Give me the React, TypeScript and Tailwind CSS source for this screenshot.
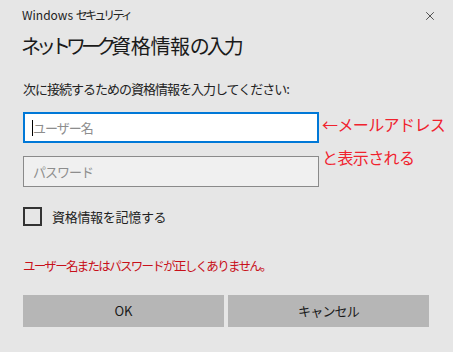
import { X } from 'lucide-react';

const font = { fontFamily: '"Noto Sans CJK JP", "Noto Sans", sans-serif' };

export default function App() {
    return (
        <div className="h-[352px] w-[453px] overflow-hidden bg-[#e6e6e6] text-[#1a1a1a]" style={font}>
            <div className="flex items-start justify-between pl-[22px] pr-[16px] pt-[6px]">
                <p className="text-[12px] leading-[18px] text-[#222]">
                    Windows <span className="tracking-[-2.8px]">セキュリティ</span>
                </p>
                <X size={14} strokeWidth={1.3} className="mt-[3px] text-[#222]" />
            </div>

            <div className="mt-[8px] pl-[21px] text-[20px] leading-[28px] text-[#1a1a1a]">
                <span className="tracking-[-5px]">ネットワーク</span>
                <span className="tracking-[-0.3px]">資格情報</span>
                <span className="tracking-[-3px]">の入力</span>
            </div>

            <p className="mt-[20px] pl-[23px] text-[13px] leading-[18px] tracking-[-1px] text-[#222]">次に接続するための資格情報を入力してください:</p>

            <div className="mt-[14px] flex items-start gap-[3px] pl-[23px]">
                <div className="flex w-[296px] flex-col gap-[13px]">
                    <div className="flex h-[31px] items-center border-2 border-[#0078d7] bg-white pl-[7px]">
                        <span className="h-[16px] w-px bg-black" />
                        <span className="text-[13px] tracking-[-1px] text-[#8d8d8d]">ユーザー名</span>
                    </div>
                    <div className="flex h-[31px] items-center border border-[#8a8a8a] bg-[#f0f0f0] pl-[9px]">
                        <span className="text-[13px] tracking-[-1px] text-[#8d8d8d]">パスワード</span>
                    </div>
                </div>
                <div className="flex flex-col gap-[11px] pt-[1px] text-[16px] leading-[22px] tracking-[-0.6px] text-[#f0222e]">
                    <span>←メールアドレス</span>
                    <span>と表示される</span>
                </div>
            </div>

            <div className="mt-[20px] flex h-[19px] items-center gap-[10px] pl-[23px]">
                <span className="h-[19px] w-[19px] border-2 border-[#333]" />
                <span className="text-[13px] tracking-[-0.3px] text-[#222]">資格情報を記憶する</span>
            </div>

            <p className="mt-[31px] pl-[23px] text-[12.5px] leading-[18px] tracking-[-1.7px] text-[#c8101a]">ユーザー名またはパスワードが正しくありません。</p>

            <div className="mt-[20px] flex gap-[4px] pl-[23px]">
                <button type="button" className="h-[32px] w-[201px] bg-[#b6b6b6] text-[13px] text-[#1a1a1a]">OK</button>
                <button type="button" className="h-[32px] w-[201px] bg-[#b6b6b6] text-[13px] tracking-[-0.8px] text-[#1a1a1a]">キャンセル</button>
            </div>
        </div>
    );
}
